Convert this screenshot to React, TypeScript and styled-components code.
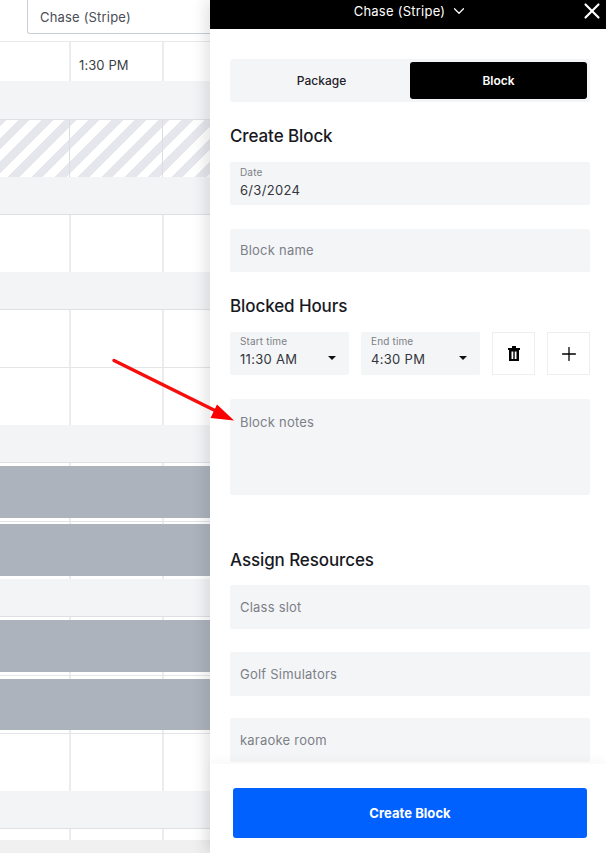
import React from "react";
import styled, { createGlobalStyle } from "styled-components";
import { ChevronDown, Plus, X } from "lucide-react";

const GlobalStyle = createGlobalStyle`
  html, body {
    margin: 0;
    padding: 0;
    background: #fff;
    overflow: hidden;
  }
  * {
    box-sizing: border-box;
  }
`;

const Page = styled.div`
  position: relative;
  width: 606px;
  height: 853px;
  overflow: hidden;
  font-family: Inter, "Liberation Sans", sans-serif;
  color: #18191f;
`;

/* calendar behind the drawer */
const Calendar = styled.div`
  width: 210px;
  display: flex;
  flex-direction: column;
`;

const TopBar = styled.div`
  height: 42px;
  padding-left: 27px;
  border-bottom: 1px solid #e8e9eb;
`;

const ProviderSelect = styled.div`
  height: 34px;
  width: 200px;
  padding: 0 0 0 12px;
  display: flex;
  align-items: center;
  border: 1px solid #c8ced7;
  border-top: none;
  border-radius: 0 0 3px 3px;
  font-size: 13px;
  letter-spacing: 0.18px;
  color: #4a4d55;
`;

const Caret = styled.span<{ $color?: string }>`
  width: 0;
  height: 0;
  border-left: 4px solid transparent;
  border-right: 4px solid transparent;
  border-top: 4px solid ${(p) => p.$color || "#101828"};
`;

const SelectCaret = styled(Caret)`
  margin-left: auto;
  margin-right: 8px;
`;

const Row = styled.div<{ $h: number; $line?: boolean }>`
  position: relative;
  height: ${(p) => p.$h}px;
  display: grid;
  grid-template-columns: 69px 2px 91px 2px 1fr;
  background: #fff;
  border-bottom: ${(p) => (p.$line ? "1px solid #e4e5e8" : "none")};
`;

const Cell = styled.div<{ $sep?: boolean }>`
  background: ${(p) => (p.$sep ? "#ececee" : "transparent")};
`;

const TimeCell = styled.div`
  padding: 15px 0 0 8px;
  font-size: 13px;
  line-height: 16px;
  letter-spacing: 0.1px;
  color: #3c3f46;
`;

const Band = styled.div<{ $h: number }>`
  height: ${(p) => p.$h}px;
  background: #f3f4f6;
  border-bottom: 1px solid #dfe0e3;
`;

const Stripes = styled(Row)`
  background: repeating-linear-gradient(
    135deg,
    #e6e6ed 0 4.7px,
    #fff 4.7px 12.95px,
    #e6e6ed 12.95px 16.5px
  );
`;

const StripeSep = styled.div`
  background: #dcdce3;
  width: 1px;
`;

const Booking = styled.div<{ $top: number; $h: number }>`
  position: absolute;
  left: 0;
  right: 0;
  top: ${(p) => p.$top}px;
  height: ${(p) => p.$h}px;
  background: #adb3bd;
`;

const Ending = styled.div`
  height: 13px;
  background: #f0f0f0;
`;

/* drawer */
const Drawer = styled.aside`
  position: absolute;
  top: 0;
  right: 0;
  bottom: 0;
  width: 396px;
  display: flex;
  flex-direction: column;
  background: #fff;
  box-shadow: -4px 0 14px rgba(40, 44, 52, 0.14);
`;

const DrawerHeader = styled.header`
  position: relative;
  flex: none;
  height: 29px;
  background: #000;
  color: #fff;
  display: flex;
  align-items: center;
  justify-content: center;
  gap: 5px;
  font-size: 13px;
  letter-spacing: 0.24px;
  padding-bottom: 7px;
  padding-left: 6px;
`;

const CloseButton = styled.span`
  position: absolute;
  right: 1px;
  top: -2px;
  display: flex;
`;

const DrawerBody = styled.div`
  flex: 1;
  min-height: 0;
  overflow: hidden;
  padding: 30px 16px 0 20px;
`;

const Tabs = styled.div`
  height: 43px;
  padding: 3px;
  display: grid;
  grid-template-columns: 177px 177px;
  justify-content: space-between;
  background: #f4f5f7;
  border-radius: 3px;
`;

const Tab = styled.div<{ $active?: boolean }>`
  display: flex;
  align-items: center;
  justify-content: center;
  border-radius: 3px;
  font-size: 12px;
  font-weight: ${(p) => (p.$active ? 600 : 500)};
  color: ${(p) => (p.$active ? "#fff" : "#1f2128")};
  background: ${(p) => (p.$active ? "#000" : "transparent")};
`;

const SectionTitle = styled.h2<{ $top: number; $bottom: number }>`
  margin: ${(p) => p.$top}px 0 ${(p) => p.$bottom}px;
  font-size: 17px;
  line-height: 22px;
  font-weight: 500;
  letter-spacing: -0.1px;
  color: #18191f;
`;

const Field = styled.div<{ $gap?: number; $h?: number; $lift?: number }>`
  position: relative;
  height: ${(p) => p.$h || 43}px;
  margin-bottom: ${(p) => p.$gap || 0}px;
  padding: 0 10px ${(p) => p.$lift || 0}px;
  display: flex;
  flex-direction: column;
  justify-content: center;
  background: #f4f5f7;
  border-radius: 2px;
`;

const FieldLabel = styled.span`
  font-size: 10px;
  line-height: 12px;
  letter-spacing: 0.15px;
  color: #7c7f87;
`;

const FieldValue = styled.span`
  margin-top: 4px;
  font-size: 13px;
  line-height: 16px;
  letter-spacing: 0.3px;
  color: #33363d;
`;

const Placeholder = styled.span`
  font-size: 13px;
  line-height: 16px;
  letter-spacing: 0.22px;
  color: #7c7f87;
`;

const NotesField = styled(Field)`
  justify-content: flex-start;
  padding-top: 15px;
`;

const HoursRow = styled.div`
  height: 43px;
  margin-bottom: 24px;
  display: grid;
  grid-template-columns: 119px 119px 43px 43px;
  column-gap: 12px;
`;

const TimeCaret = styled(Caret)`
  position: absolute;
  right: 13px;
  top: 24px;
  border-top-color: #111;
`;

const IconButton = styled.div`
  display: flex;
  align-items: center;
  justify-content: center;
  border: 1px solid #eceef0;
  background: #fff;
  color: #000;
`;

const Footer = styled.footer`
  flex: none;
  height: 89px;
  padding: 24px 19px 0 23px;
  background: #fff;
  box-shadow: 0 -3px 10px rgba(40, 44, 52, 0.04);
  position: relative;
`;

const SubmitButton = styled.button`
  width: 100%;
  height: 50px;
  border: none;
  border-radius: 3px;
  background: #0061ff;
  color: #fff;
  font-family: inherit;
  font-size: 13px;
  font-weight: 700;
  letter-spacing: 0.05px;
`;

const Annotation = styled.svg`
  position: absolute;
  left: 0;
  top: 0;
  pointer-events: none;
`;

const TrashIcon = () => (
  <svg width="12" height="15" viewBox="0 0 12 15" aria-hidden="true">
    <path
      fill="#000"
      fillRule="evenodd"
      d="M4 0h4v2h4v2h-1v11H1V4H0V2h4V0Zm-.500 5.500v7.500h1.800V5.500H3.500Zm3.200 0v7.500h1.800V5.500H6.700Z"
    />
  </svg>
);

const Cells = () => (
  <>
    <Cell />
    <Cell $sep />
    <Cell />
    <Cell $sep />
    <Cell />
  </>
);

const App: React.FC = () => {
  return (
    <Page>
      <GlobalStyle />
      <Calendar>
        <TopBar>
          <ProviderSelect>
            Chase (Stripe)
            <SelectCaret />
          </ProviderSelect>
        </TopBar>
        <Row $h={39}>
          <Cell />
          <Cell $sep />
          <TimeCell>1:30 PM</TimeCell>
          <Cell $sep />
          <Cell />
        </Row>
        <Band $h={39} />
        <Stripes $h={57}>
          <Cell />
          <StripeSep />
          <Cell />
          <StripeSep />
          <Cell />
        </Stripes>
        <Band $h={38} />
        <Row $h={57}>
          <Cells />
        </Row>
        <Band $h={38} />
        <Row $h={58} $line>
          <Cells />
        </Row>
        <Row $h={57}>
          <Cells />
        </Row>
        <Band $h={38} />
        <Row $h={59} $line>
          <Cells />
          <Booking $top={3} $h={52} />
        </Row>
        <Row $h={57}>
          <Cells />
          <Booking $top={2} $h={52} />
        </Row>
        <Band $h={38} />
        <Row $h={59} $line>
          <Cells />
          <Booking $top={3} $h={52} />
        </Row>
        <Row $h={58} $line>
          <Cells />
          <Booking $top={3} $h={51} />
        </Row>
        <Row $h={57}>
          <Cells />
        </Row>
        <Band $h={38} />
        <Row $h={11}>
          <Cells />
        </Row>
        <Ending />
      </Calendar>

      <Drawer>
        <DrawerHeader>
          Chase (Stripe)
          <ChevronDown size={18} strokeWidth={1.6} />
          <CloseButton>
            <X size={26} strokeWidth={2} />
          </CloseButton>
        </DrawerHeader>

        <DrawerBody>
          <Tabs>
            <Tab>Package</Tab>
            <Tab $active>Block</Tab>
          </Tabs>

          <SectionTitle $top={23} $bottom={15}>
            Create Block
          </SectionTitle>
          <Field $gap={24} $lift={4}>
            <FieldLabel>Date</FieldLabel>
            <FieldValue>6/3/2024</FieldValue>
          </Field>
          <Field $lift={1}>
            <Placeholder>Block name</Placeholder>
          </Field>

          <SectionTitle $top={23} $bottom={15}>
            Blocked Hours
          </SectionTitle>
          <HoursRow>
            <Field $lift={6}>
              <FieldLabel>Start time</FieldLabel>
              <FieldValue>11:30 AM</FieldValue>
              <TimeCaret />
            </Field>
            <Field $lift={6}>
              <FieldLabel>End time</FieldLabel>
              <FieldValue>4:30 PM</FieldValue>
              <TimeCaret />
            </Field>
            <IconButton>
              <TrashIcon />
            </IconButton>
            <IconButton>
              <Plus size={22} strokeWidth={1.4} />
            </IconButton>
          </HoursRow>
          <NotesField $h={96}>
            <Placeholder>Block notes</Placeholder>
          </NotesField>

          <SectionTitle $top={54} $bottom={14}>
            Assign Resources
          </SectionTitle>
          <Field $h={44} $gap={23}>
            <Placeholder>Class slot</Placeholder>
          </Field>
          <Field $h={44} $gap={22} $lift={1}>
            <Placeholder>Golf Simulators</Placeholder>
          </Field>
          <Field $h={44}>
            <Placeholder>karaoke room</Placeholder>
          </Field>
        </DrawerBody>

        <Footer>
          <SubmitButton>Create Block</SubmitButton>
        </Footer>
      </Drawer>

      <Annotation width="606" height="853" viewBox="0 0 606 853" aria-hidden="true">
        <path d="M114 360.500L222 414" stroke="#f80d0d" strokeWidth="3.500" strokeLinecap="round" />
        <path d="M234 420.500L217 404.500L210.500 418Z" fill="#fb0000" />
      </Annotation>
    </Page>
  );
};

export default App;
